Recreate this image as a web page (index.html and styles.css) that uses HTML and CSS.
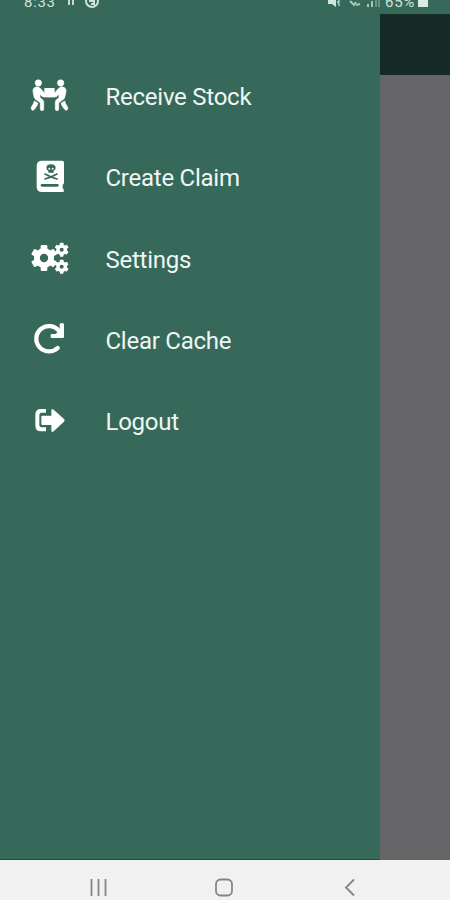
FILE: index.html
```html
<!DOCTYPE html>
<html lang="en">
<head>
<meta charset="utf-8">
<title>Menu</title>
<link rel="stylesheet" href="styles.css">
</head>
<body>
<div class="phone">
  <header class="status">
    <div class="status-group">
      <span class="time">8:33</span>
      <svg class="notices" width="36" height="14" viewBox="0 0 36 14">
        <path d="M4 0v5M8 0v5" stroke="#c8dcd5" stroke-width="2"/>
        <circle cx="27" cy="1" r="6" fill="none" stroke="#d0e2dc" stroke-width="2"/>
        <path d="M24 1h5v3h-3" fill="none" stroke="#d0e2dc" stroke-width="2"/>
      </svg>
    </div>
    <div class="status-group">
      <svg width="54" height="14" viewBox="0 0 54 14">
        <path d="M0 0h8v7L4 4H0z" fill="#d3e5df"/>
        <path d="M9.500 1l2 5M11 0v3" stroke="#a9c8be" stroke-width="1.500"/>
        <path d="M22 1l4 4 2-3M28 5l4-1" fill="none" stroke="#a9c8be" stroke-width="2"/>
        <path d="M40 4v3M44 1v6" stroke="#b2cec5" stroke-width="1.800"/>
        <path d="M48 0v7M51 0v7" stroke="#6f9889" stroke-width="1.800"/>
      </svg>
      <span class="percent">65%</span>
      <i class="battery"></i>
    </div>
  </header>
  <main class="screen">
    <nav class="drawer">
      <a class="item">
        <svg class="icon" viewBox="0 0 180 150">
          <g id="carrier" class="bold">
            <circle cx="55" cy="39" r="9.500"/>
            <path d="M43 53q-5 4-4 12l4 18q2 5 8 8l10 7v19q0 5 5 5t5-5V96q0-5-5-8l-6-5V72l5 6q3 3 8 3h17V71H75L62 56q-9-9-19-3z"/>
            <path d="M43 93q-1 7-7 15-5 7-1 11 5 4 9-2 8-10 10-17z"/>
          </g>
          <use href="#carrier" transform="matrix(-1 0 0 1 177 0)"/>
          <rect x="73" y="54" width="31" height="23" rx="1"/>
        </svg>
        <span>Receive Stock</span>
      </a>
      <a class="item">
        <svg class="icon" viewBox="0 4 180 150">
          <path d="M66 33h60q6 0 6 6v62l-4 5v11h3v10H66q-16 0-16-16V49q0-16 16-16z"/>
          <g class="cut">
            <path d="M79 55q0-11 14-11t14 11q0 6-6 8v6H85v-6q-6-2-6-8z"/>
            <path class="line bones" d="M75 73q18 10 36 15M75 88q18-5 36-15"/>
            <path class="line" d="M66 107h46"/>
          </g>
          <circle cx="88" cy="57" r="3"/><circle cx="98" cy="57" r="3"/>
        </svg>
        <span>Create Claim</span>
      </a>
      <a class="item">
        <svg class="icon" viewBox="0 8 180 150">
          <defs>
            <g id="gear">
              <circle r="30"/>
              <g id="teeth">
                <rect x="-10" y="-39" width="20" height="78" rx="4"/>
                <rect x="-10" y="-39" width="20" height="78" rx="4" transform="rotate(60)"/>
                <rect x="-10" y="-39" width="20" height="78" rx="4" transform="rotate(120)"/>
              </g>
            </g>
          </defs>
          <use href="#gear" transform="translate(72 83)"/>
          <use href="#gear" transform="translate(125 58) scale(.54)"/>
          <use href="#gear" transform="translate(125 109) scale(.54)"/>
          <g class="cut"><circle cx="72" cy="83" r="12.500"/><circle cx="125" cy="58" r="6"/><circle cx="125" cy="109" r="6"/></g>
        </svg>
        <span>Settings</span>
      </a>
      <a class="item">
        <svg class="icon" viewBox="0 6 180 150">
          <path class="stroke" d="M113 108A38 38 0 1 1 117 57"/>
          <path d="M119 37q0-3 3-3h6q4 0 4 3v37q0 4-4 4H95q-3 0-3-3v-6q0-3 3-3h12l12-12z"/>
        </svg>
        <span>Clear Cache</span>
      </a>
      <a class="item">
        <svg class="icon" viewBox="1 0 180 150">
          <path d="M79 42v11H66q-7 0-7 7v30q0 7 7 7h13v12H64q-17 0-17-17V59q0-17 17-17z"/>
          <path d="M68 62h27V47q0-8 7-3l31 28q4 4 0 8l-31 29q-7 5-7-3V90H68q-3 0-3-3V65q0-3 3-3z"/>
        </svg>
        <span>Logout</span>
      </a>
    </nav>
    <div class="behind"><div class="appbar"></div></div>
  </main>
  <footer class="navbar">
    <svg width="450" height="40" viewBox="0 0 450 40" fill="none" stroke="#858585" stroke-width="1.800">
      <path d="M91.500 19v17M98.500 19v17M105.500 19v17"/>
      <rect x="216" y="19.500" width="16" height="16" rx="4.500"/>
      <path d="M354 19.500L346 27.500l8 8"/>
    </svg>
  </footer>
</div>
</body>
</html>
```
FILE: styles.css
```css
body {
  margin: 0;
  font-family: Roboto, "Liberation Sans", sans-serif;
}
.phone {
  width: 450px;
  height: 900px;
  display: flex;
  flex-direction: column;
  overflow: hidden;
  background: #366959;
}
.status {
  height: 14px;
  box-sizing: border-box;
  padding: 0 22px 0 24px;
  display: flex;
  justify-content: space-between;
  overflow: hidden;
  color: #cfe2dc;
  font-size: 15px;
  line-height: 18px;
}
.status-group {
  display: flex;
  align-items: flex-start;
}
.time,
.percent {
  margin-top: -7px;
  letter-spacing: .7px;
}
.time { width: 33px; }
.notices { margin-left: 8px; }
.percent { width: 33px; margin-left: 3px; }
.battery {
  width: 10px;
  height: 7px;
  background: #d9eae4;
}
.screen {
  flex: 1;
  display: flex;
}
.drawer {
  width: 380px;
  box-sizing: border-box;
  padding-top: 42.4px;
  border-bottom: 1px solid #19543f;
}
.item {
  display: flex;
  align-items: center;
  height: 81.25px;
  padding-left: 20px;
  color: #eff6f3;
  font-size: 24px;
  letter-spacing: -.25px;
}
.icon {
  width: 60px;
  height: 50px;
  margin-right: 25.5px;
  margin-top: -3.8px;
  fill: #fff;
}
.bold {
  stroke: #fff;
  stroke-width: 2;
}
.cut { fill: #366959; }
.line {
  fill: none;
  stroke: #366959;
  stroke-width: 8;
  stroke-linecap: round;
}
.bones { stroke-width: 5; }
.stroke {
  fill: none;
  stroke: #fff;
  stroke-width: 13;
  stroke-linecap: round;
}
.behind {
  flex: 1;
  background: #656466;
}
.appbar {
  height: 61px;
  background: #172b26;
}
.navbar {
  height: 40px;
  background: #f1f1f1;
}
.navbar svg { display: block; }
```
